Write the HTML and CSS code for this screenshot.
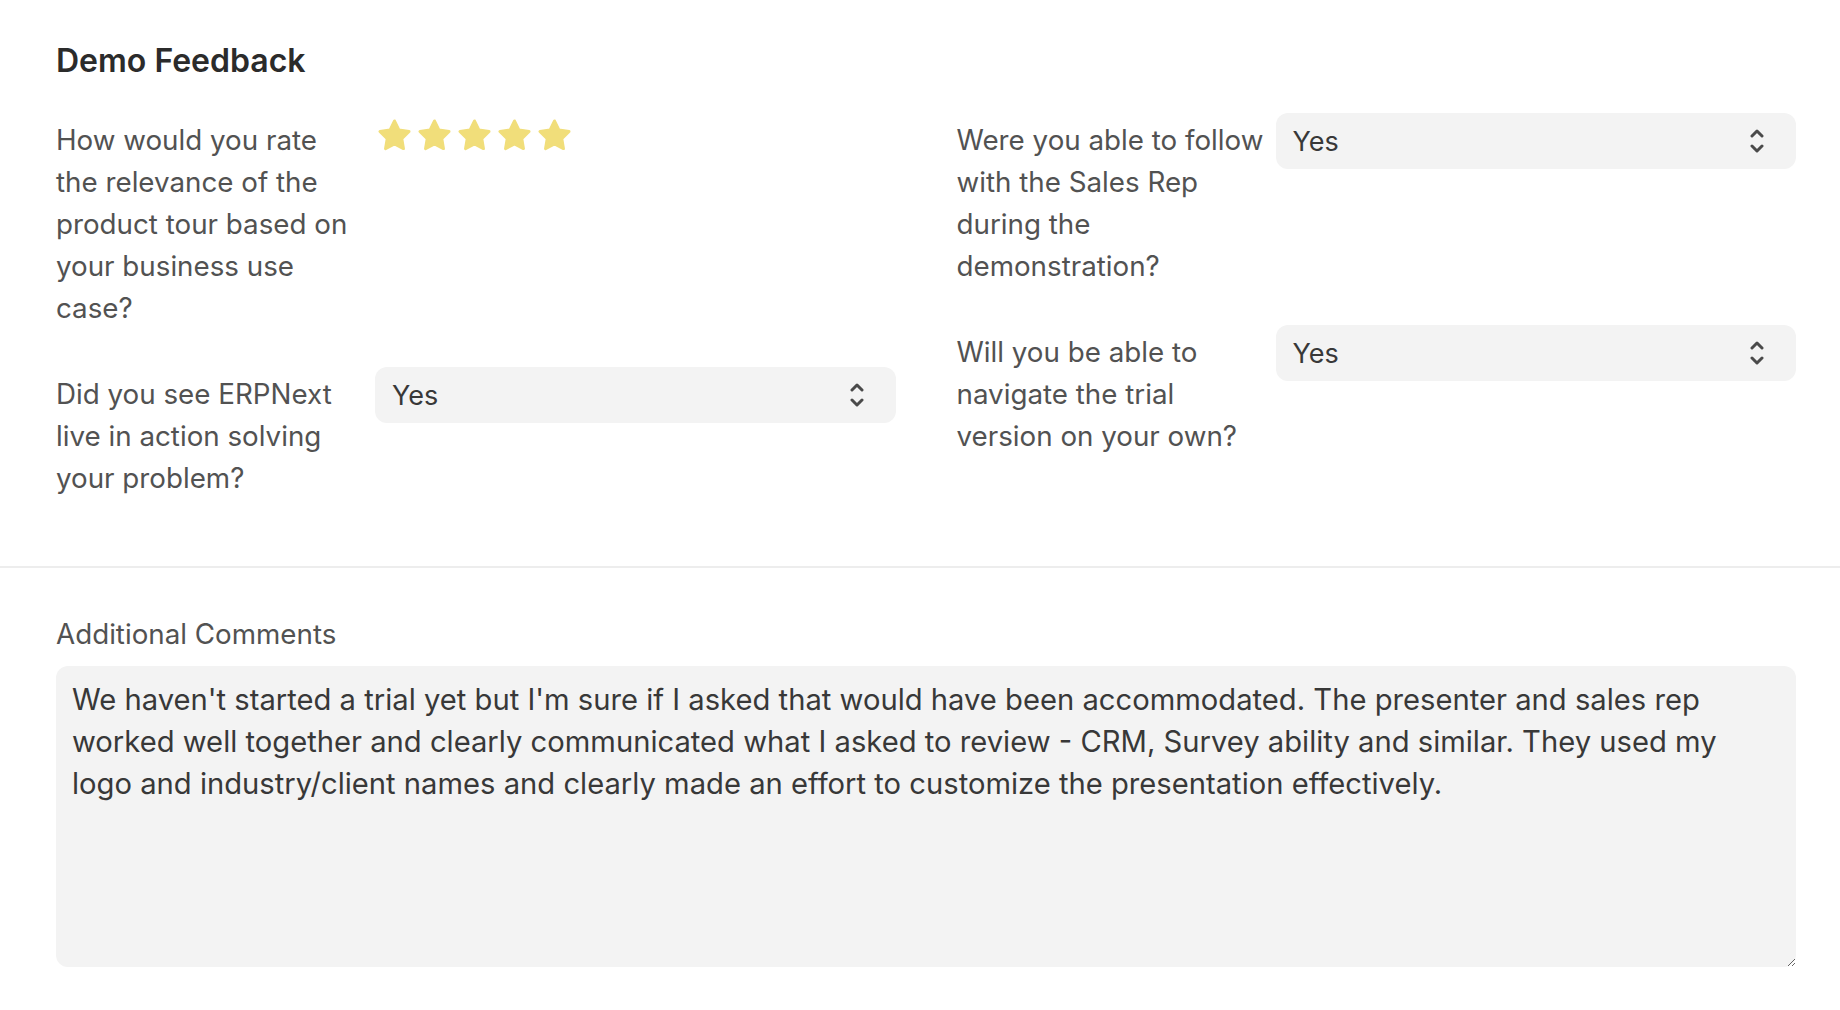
FILE: index.html
```html
<!DOCTYPE html>
<html lang="en">
<head>
  <meta charset="UTF-8">
  <meta name="viewport" content="width=device-width, initial-scale=1.0">
  <title>Demo Feedback</title>
  <link rel="stylesheet" href="styles.css">
</head>
<body>
  <div class="section">
    <h2 class="section-title">Demo Feedback</h2>

    <div class="columns">
      <div class="column">
        <div class="field">
          <label class="field-label">How would you rate the relevance of the product tour based on your business use case?</label>
          <div class="rating">
            <svg class="star" viewBox="0 0 24 24"><polygon points="12 2 15.09 8.26 22 9.27 17 14.14 18.18 21.02 12 17.77 5.82 21.02 7 14.14 2 9.27 8.91 8.26 12 2"/></svg>
            <svg class="star" viewBox="0 0 24 24"><polygon points="12 2 15.09 8.26 22 9.27 17 14.14 18.18 21.02 12 17.77 5.82 21.02 7 14.14 2 9.27 8.91 8.26 12 2"/></svg>
            <svg class="star" viewBox="0 0 24 24"><polygon points="12 2 15.09 8.26 22 9.27 17 14.14 18.18 21.02 12 17.77 5.82 21.02 7 14.14 2 9.27 8.91 8.26 12 2"/></svg>
            <svg class="star" viewBox="0 0 24 24"><polygon points="12 2 15.09 8.26 22 9.27 17 14.14 18.18 21.02 12 17.77 5.82 21.02 7 14.14 2 9.27 8.91 8.26 12 2"/></svg>
            <svg class="star" viewBox="0 0 24 24"><polygon points="12 2 15.09 8.26 22 9.27 17 14.14 18.18 21.02 12 17.77 5.82 21.02 7 14.14 2 9.27 8.91 8.26 12 2"/></svg>
          </div>
        </div>

        <div class="field">
          <label class="field-label">Did you see ERPNext live in action solving your problem?</label>
          <div class="select">
            <span>Yes</span>
            <svg class="chevrons" viewBox="0 0 14 28"><path d="M2 9 L7 4 L12 9 M2 19 L7 24 L12 19"/></svg>
          </div>
        </div>
      </div>

      <div class="column">
        <div class="field">
          <label class="field-label">Were you able to follow with the Sales Rep during the demonstration?</label>
          <div class="select">
            <span>Yes</span>
            <svg class="chevrons" viewBox="0 0 14 28"><path d="M2 9 L7 4 L12 9 M2 19 L7 24 L12 19"/></svg>
          </div>
        </div>

        <div class="field">
          <label class="field-label">Will you be able to navigate the trial version on your own?</label>
          <div class="select">
            <span>Yes</span>
            <svg class="chevrons" viewBox="0 0 14 28"><path d="M2 9 L7 4 L12 9 M2 19 L7 24 L12 19"/></svg>
          </div>
        </div>
      </div>
    </div>
  </div>

  <div class="section comments">
    <label class="comments-label">Additional Comments</label>
    <textarea class="comments-box">We haven't started a trial yet but I'm sure if I asked that would have been accommodated. The presenter and sales rep
worked well together and clearly communicated what I asked to review - CRM, Survey ability and similar. They used my
logo and industry/client names and clearly made an effort to customize the presentation effectively.</textarea>
  </div>
</body>
</html>
```

FILE: styles.css
```css
body {
  margin: 0;
  background-color: #fff;
  font-family: Inter, "Noto Sans", sans-serif;
  color: #383838;
}

.section {
  padding: 41px 44px 67px 56px;
  border-bottom: 2px solid #ededed;
}

.section-title {
  margin: 0 0 32px 0;
  font-size: 32px;
  line-height: 40px;
  font-weight: 600;
  color: #2b2b2b;
}

.columns {
  display: grid;
  grid-template-columns: 1fr 1fr;
  column-gap: 61px;
}

.column {
  display: flex;
  flex-direction: column;
  gap: 38px;
}

.field {
  display: grid;
  grid-template-columns: 307px 1fr;
  column-gap: 12px;
  align-items: start;
}

.field-label {
  padding-top: 6px;
  font-size: 27.75px;
  line-height: 42px;
  color: #525252;
}

.rating {
  display: flex;
  gap: 5px;
  margin-top: 5px;
  margin-left: 2px;
}

.star {
  width: 35px;
  height: 35px;
  fill: #f1de7a;
  stroke: #f1de7a;
  stroke-width: 2;
  stroke-linejoin: round;
}

.select {
  display: flex;
  align-items: center;
  justify-content: space-between;
  height: 56px;
  padding: 0 32px 0 17px;
  background-color: #f3f3f3;
  border-radius: 12px;
  font-size: 27px;
  color: #383838;
}

.chevrons {
  width: 14px;
  height: 28px;
  fill: none;
  stroke: #4a4a4a;
  stroke-width: 3;
  stroke-linecap: round;
  stroke-linejoin: round;
}

.comments {
  padding: 45px 44px 0 56px;
  border-bottom: none;
}

.comments-label {
  display: block;
  font-size: 27.75px;
  line-height: 42px;
  color: #525252;
  margin-bottom: 11px;
}

.comments-box {
  display: block;
  box-sizing: border-box;
  width: 100%;
  height: 301px;
  padding: 13px 16px;
  border: none;
  border-radius: 12px;
  background-color: #f3f3f3;
  font-family: Inter, "Noto Sans", sans-serif;
  font-size: 29.2px;
  line-height: 42px;
  color: #383838;
  outline: none;
}
```
